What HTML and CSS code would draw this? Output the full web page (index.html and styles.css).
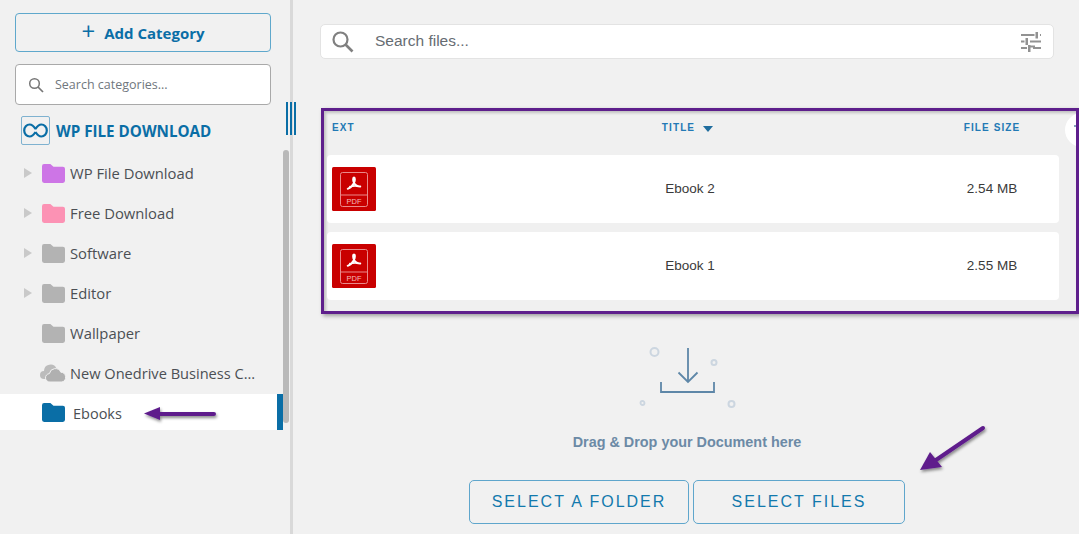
FILE: index.html
```html
<!DOCTYPE html>
<html lang="en">
<head>
<meta charset="utf-8">
<title>WP File Download</title>
<link rel="stylesheet" href="styles.css">
</head>
<body>
<div class="app">
  <aside class="sidebar">
    <div class="side-top">
      <button class="add-btn"><span class="plus">+</span>Add Category</button>
      <div class="cat-search">
        <svg class="cat-search-icon" width="16" height="16" viewBox="0 0 16 16"><circle cx="6.500" cy="6.500" r="4.800" fill="none" stroke="#777" stroke-width="1.500"/><path d="M10 10l5 5" stroke="#777" stroke-width="1.700"/></svg>
        <span>Search categories...</span>
      </div>
      <div class="brand">
        <span class="brand-logo">
          <svg width="25" height="15" viewBox="0 0 25 15"><path d="M12.500 6C10.600 3 8.600 1.500 6.700 1.500 3.600 1.500 1.200 4.300 1.200 7.500s2.400 6 5.500 6c1.900 0 3.900-1.500 5.800-4.500M12.500 6C14.400 3 16.400 1.500 18.300 1.500c3.100 0 5.500 2.800 5.500 6s-2.400 6-5.500 6c-1.900 0-3.900-1.500-5.800-4.500" fill="none" stroke="#0a6ea6" stroke-width="2.200"/></svg>
        </span>
        <span class="brand-name">WP FILE DOWNLOAD</span>
      </div>
    </div>
    <ul class="tree">
      <li class="node"><span class="caret"></span><svg class="folder f-purple" viewBox="0 0 22 18"><path d="M0 2a2 2 0 0 1 2-2h6l3 2.500h9a2 2 0 0 1 2 2V16a2 2 0 0 1-2 2H2a2 2 0 0 1-2-2z"/></svg><span>WP File Download</span></li>
      <li class="node"><span class="caret"></span><svg class="folder f-pink" viewBox="0 0 22 18"><path d="M0 2a2 2 0 0 1 2-2h6l3 2.500h9a2 2 0 0 1 2 2V16a2 2 0 0 1-2 2H2a2 2 0 0 1-2-2z"/></svg><span>Free Download</span></li>
      <li class="node"><span class="caret"></span><svg class="folder f-gray" viewBox="0 0 22 18"><path d="M0 2a2 2 0 0 1 2-2h6l3 2.500h9a2 2 0 0 1 2 2V16a2 2 0 0 1-2 2H2a2 2 0 0 1-2-2z"/></svg><span>Software</span></li>
      <li class="node"><span class="caret"></span><svg class="folder f-gray" viewBox="0 0 22 18"><path d="M0 2a2 2 0 0 1 2-2h6l3 2.500h9a2 2 0 0 1 2 2V16a2 2 0 0 1-2 2H2a2 2 0 0 1-2-2z"/></svg><span>Editor</span></li>
      <li class="node"><span class="caret hidden"></span><svg class="folder f-gray" viewBox="0 0 22 18"><path d="M0 2a2 2 0 0 1 2-2h6l3 2.500h9a2 2 0 0 1 2 2V16a2 2 0 0 1-2 2H2a2 2 0 0 1-2-2z"/></svg><span>Wallpaper</span></li>
      <li class="node"><svg class="cloud" viewBox="0 0 27 18"><path d="M4 15a4 4 0 0 1 0-8 6.500 6.500 0 0 1 12.500-2.500A5 5 0 0 1 20 9v6z" fill="#bcbcbc"/><path d="M10 18a4.200 4.200 0 0 1-.6-8.400 6 6 0 0 1 11.400-1.400A5 5 0 0 1 22 18z" fill="#b0b0b0" stroke="#f1f1f1" stroke-width="1"/></svg><span class="cloud-label">New Onedrive Business C...</span></li>
      <li class="node node-active"><svg class="folder f-blue" viewBox="0 0 22 18"><path d="M0 2a2 2 0 0 1 2-2h6l3 2.500h9a2 2 0 0 1 2 2V16a2 2 0 0 1-2 2H2a2 2 0 0 1-2-2z"/></svg><span class="active-label">Ebooks</span></li>
    </ul>
    <div class="scrollbar"></div>
  </aside>
  <span class="handle"></span>

  <main class="main">
    <div class="column">
      <div class="file-search">
        <svg width="24" height="24" viewBox="0 0 24 24"><circle cx="9.500" cy="9.500" r="7" fill="none" stroke="#808080" stroke-width="2.200"/><path d="M14.500 14.500l7 7" stroke="#808080" stroke-width="2.600"/></svg>
        <span class="file-search-text">Search files...</span>
        <svg class="sliders" width="22" height="20" viewBox="0 0 22 20"><path d="M1 3h13.500M20 3h1M1 9.500h3.500M10 9.500h11M1 16h6M13 16h8" stroke="#929292" stroke-width="2.200"/><path d="M15.500 0v6.500H18V0zM5.500 6v7H8V6zM8 13v7h2.500v-7z" fill="#929292"/><path d="M8 14.500h7" stroke="#929292" stroke-width="2"/></svg>
      </div>
    </div>

    <section class="table-box">
      <div class="grid thead">
        <span class="th-ext">EXT</span>
        <span class="th-title">TITLE<span class="sort"></span></span>
        <span class="th-size">FILE SIZE</span>
      </div>
      <div class="grid row">
        <svg class="pdf" viewBox="0 0 44 44"><rect width="44" height="44" rx="1.500" fill="#c90000"/><rect x="8.500" y="5.500" width="27" height="34" rx="2" fill="none" stroke="#ea8a8a"/><path d="M8.500 28h27" stroke="#ea8a8a"/><path d="M22 10.500c-1.200 0-1.200 2.500 0 5.500M22 10.500c1.200 0 1.200 2.500 0 5.500M22 16c-1.500 3-4 5-6.300 5.800M22 16c1.500 2.500 4 3.500 6.300 3.500M18 19.700c3-1 5.500-1 8.500-.5" fill="none" stroke="#fff" stroke-width="1.900" stroke-linecap="round"/><text x="22" y="36.500" class="pdf-label">PDF</text></svg>
        <span class="cell">Ebook 2</span>
        <span class="cell">2.54 MB</span>
      </div>
      <div class="grid row">
        <svg class="pdf" viewBox="0 0 44 44"><rect width="44" height="44" rx="1.500" fill="#c90000"/><rect x="8.500" y="5.500" width="27" height="34" rx="2" fill="none" stroke="#ea8a8a"/><path d="M8.500 28h27" stroke="#ea8a8a"/><path d="M22 10.500c-1.200 0-1.200 2.500 0 5.500M22 10.500c1.200 0 1.200 2.500 0 5.500M22 16c-1.500 3-4 5-6.300 5.800M22 16c1.500 2.500 4 3.500 6.300 3.500M18 19.700c3-1 5.500-1 8.500-.5" fill="none" stroke="#fff" stroke-width="1.900" stroke-linecap="round"/><text x="22" y="36.500" class="pdf-label">PDF</text></svg>
        <span class="cell">Ebook 1</span>
        <span class="cell">2.55 MB</span>
      </div>
      <span class="col-toggle"><svg width="14" height="14" viewBox="0 0 14 14"><path d="M3 3h10M8 3v10" stroke="#5f86a6" stroke-width="1.600"/></svg></span>
    </section>

    <div class="column">
      <div class="drop">
        <svg class="drop-art" width="110" height="70" viewBox="0 0 110 70">
          <circle cx="15.500" cy="7" r="4" fill="none" stroke="#ccd6e0" stroke-width="2"/>
          <circle cx="75" cy="17.500" r="2.500" fill="none" stroke="#ccd6e0" stroke-width="2"/>
          <circle cx="3.500" cy="58" r="2" fill="none" stroke="#ccd6e0" stroke-width="1.800"/>
          <circle cx="92.500" cy="59" r="3" fill="none" stroke="#ccd6e0" stroke-width="2"/>
          <path d="M49 3v34M39.500 27.500l9.500 9.500 9.500-9.500" fill="none" stroke="#5e87a8" stroke-width="1.800"/>
          <path d="M22 37v10h53V37" fill="none" stroke="#5e87a8" stroke-width="1.800"/>
        </svg>
        <p class="drop-text">Drag &amp; Drop your Document here</p>
        <div class="drop-actions">
          <button class="pick pick-folder">SELECT A FOLDER</button>
          <button class="pick pick-files">SELECT FILES</button>
        </div>
      </div>
    </div>
  </main>
</div>

<svg class="annotation arrow-left" width="90" height="24" viewBox="0 0 90 24"><defs><filter id="sh1" x="-20%" y="-60%" width="140%" height="260%"><feDropShadow dx="1" dy="2" stdDeviation="1.500" flood-color="#000" flood-opacity=".45"/></filter></defs><g filter="url(#sh1)"><path d="M18 12H74" stroke="#5e1f8c" stroke-width="4" stroke-linecap="round"/><path d="M4 11.500L20 5v13z" fill="#5e1f8c"/></g></svg>
<svg class="annotation arrow-diag" width="80" height="60" viewBox="0 0 80 60"><defs><filter id="sh2" x="-20%" y="-20%" width="140%" height="140%"><feDropShadow dx="1" dy="2" stdDeviation="1.500" flood-color="#000" flood-opacity=".45"/></filter></defs><g filter="url(#sh2)"><path d="M69 7L22 39" stroke="#5e1f8c" stroke-width="4" stroke-linecap="round"/><path d="M6 49L16 31 28 46z" fill="#5e1f8c"/></g></svg>
</body>
</html>
```

FILE: styles.css
```css
* { box-sizing: border-box; }
html, body { margin: 0; height: 100%; overflow: hidden; }
body { background: #f1f1f1; font-family: "Liberation Sans", Arial, sans-serif; position: relative; }
ul { list-style: none; margin: 0; padding: 0; }
button { font: inherit; background: none; cursor: pointer; }

.app { display: flex; height: 534px; }

.sidebar { position: relative; width: 293px; flex: none; border-right: 3px solid #d9d9d9; padding-top: 13px; font-family: "Open Sans", "Noto Sans", sans-serif; }
.side-top { padding: 0 19px 0 15px; }
.add-btn { display: flex; align-items: center; justify-content: center; width: 100%; height: 39px; border: 1px solid #5fa8cc; border-radius: 4px; color: #0a6ea6; font-family: "Open Sans", sans-serif; font-size: 15px; font-weight: 700; }
.plus { font-size: 24px; font-weight: 400; line-height: 1; margin-right: 9px; margin-top: -4px; }
.cat-search { display: flex; align-items: center; height: 41px; margin-top: 12px; padding-left: 12px; background: #fff; border: 1px solid #a9a9a9; border-radius: 4px; color: #70777d; font-size: 12.500px; }
.cat-search-icon { margin-right: 11px; }
.brand { display: flex; align-items: center; height: 30px; margin-top: 10px; padding-left: 6px; }
.brand-logo { display: flex; align-items: center; justify-content: center; width: 29px; height: 29px; border: 1px solid #7fb2d0; border-radius: 2px; }
.brand-name { margin: 1px 0 0 6px; color: #0a6ea6; font-size: 15.200px; font-weight: 700; }

.tree { margin-top: 8px; color: #4b4f54; font-size: 14.800px; }
.node { display: flex; align-items: center; height: 40px; padding-left: 24px; white-space: nowrap; }
.caret { width: 0; height: 0; margin-right: 10px; border-left: 8px solid #c9c9c9; border-top: 5px solid transparent; border-bottom: 5px solid transparent; }
.caret.hidden { visibility: hidden; }
.folder { width: 23px; height: 19px; margin-right: 5px; flex: none; }
.f-purple { fill: #cd75e6; }
.f-pink { fill: #fc92b4; }
.f-gray { fill: #b3b3b3; }
.f-blue { fill: #0a6ea6; }
.cloud { width: 27px; height: 18px; margin: 0 3px 0 16px; flex: none; }
.cloud-label { font-size: 14.600px; }
.node-active { height: 36px; margin-top: 1px; margin-right: 7px; padding-left: 42px; background: #fff; border-right: 6px solid #0a6ea6; }
.node-active .folder { margin-right: 8px; }
.active-label { padding-top: 2px; font-size: 14.500px; }
.scrollbar { position: absolute; top: 150px; right: 1px; width: 6px; height: 273px; background: #b9b9b9; border-radius: 3px; }
.handle { position: absolute; left: 286px; top: 102px; width: 11px; height: 33px; background: repeating-linear-gradient(90deg, #0a6ea6 0 2px, transparent 2px 4px); z-index: 2; }

.main { flex: 1; min-width: 0; padding-top: 24px; }
.column { width: 734px; margin-left: 27px; }
.file-search { display: flex; align-items: center; height: 35px; padding: 0 11px 0 10px; background: #fff; border: 1px solid #e3e3e3; border-radius: 5px; }
.file-search-text { flex: 1; margin: -1px 0 0 20px; color: #666c72; font-size: 15.500px; }

.table-box { position: relative; width: 758px; height: 206px; margin: 49px 0 0 28px; border: 3px solid #5e1f8c; overflow: hidden; background: #f0f0f0; box-shadow: 2px 2px 4px rgba(0,0,0,.35), inset 2px 2px 3px rgba(0,0,0,.2); }
.grid { display: grid; grid-template-columns: 121px 200px 130px; column-gap: 137px; align-items: center; padding-left: 5px; }
.thead { height: 44px; padding-left: 8px; color: #2279b5; font-size: 10px; font-weight: 700; letter-spacing: 1.100px; grid-template-columns: 118px 200px 130px; }
.thead span { margin-top: -12px; }
.th-title { text-align: center; padding-left: 1px; }
.th-title .sort { display: inline-block; width: 0; height: 0; margin: 0 0 -1px 8px; border-top: 6px solid #1f6d9e; border-left: 5px solid transparent; border-right: 5px solid transparent; }
.th-size { text-align: center; padding-left: 6px; }
.row { width: 732px; height: 68px; margin: 0 0 9px 3px; background: #fff; border-radius: 4px; color: #3a3a3a; font-size: 13.500px; }
.cell { text-align: center; margin-top: -1px; }
.pdf { width: 44px; height: 44px; }
.pdf-label { fill: #f4b9b9; font-family: "Liberation Sans", sans-serif; font-size: 7.500px; text-anchor: middle; }
.col-toggle { position: absolute; top: 2px; left: 741px; display: flex; align-items: center; justify-content: flex-start; width: 34px; height: 34px; padding-left: 6px; background: #fff; border-radius: 50%; }

.drop { display: flex; flex-direction: column; align-items: center; margin-top: 31px; }
.drop-art { margin-left: 13px; display: block; }
.drop-text { margin: 19px 0 0; height: 16px; line-height: 16px; color: #6c8aa6; font-size: 14.400px; font-weight: 700; }
.drop-actions { display: flex; gap: 4px; margin-top: 30px; }
.pick { height: 44px; border: 1px solid #5fa6cc; border-radius: 5px; color: #1279ad; font-family: "Liberation Sans", sans-serif; font-size: 16px; letter-spacing: 2px; }
.pick-folder { width: 220px; }
.pick-files { width: 212px; }

.annotation { position: absolute; z-index: 3; }
.arrow-left { left: 140px; top: 402px; }
.arrow-diag { left: 914px; top: 421px; }
```
